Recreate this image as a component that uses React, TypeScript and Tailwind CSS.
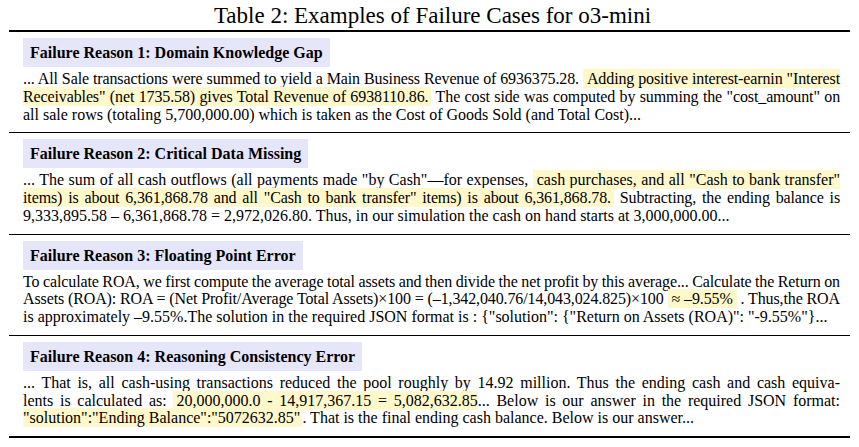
import React from 'react';

type Line = { parts: React.ReactNode; last?: boolean; tight?: boolean };

function Hl({ children, className = '' }: { children: React.ReactNode; className?: string }) {
  return <span className={`bg-[#fff8cb] py-px ${className}`}>{children}</span>;
}

function Section({ title, lines, first }: { title: string; lines: Line[]; first?: boolean }) {
  return (
    <div className={`pl-[14px] pr-[10px] pt-[6px] pb-[9px] ${first ? '' : 'border-t border-black'}`}>
      <div className="inline-block h-[29px] leading-[29px] px-[7px] bg-[#e6e6fa] font-bold text-[16px]">
        {title}
      </div>
      <div className="mt-[3px] text-[16px] leading-[17.75px]">
        {lines.map((l, i) => (
          <div
            key={i}
            className={
              l.last
                ? 'text-left whitespace-nowrap'
                : l.tight
                  ? 'text-justify [text-align-last:justify] whitespace-nowrap tracking-[-0.12px] [word-spacing:-2px]'
                  : 'text-justify [text-align-last:justify] whitespace-nowrap [word-spacing:-2px]'
            }
          >
            {l.parts}
          </div>
        ))}
      </div>
    </div>
  );
}

export default function App() {
  return (
    <div className="w-[859px] h-[447px] bg-white text-black font-['Liberation_Serif',serif] overflow-hidden">
      <div className="h-[30px] pt-[2px] pl-[6px] text-center text-[23px] leading-[28px]">
        Table 2: Examples of Failure Cases for o3-mini
      </div>
      <div className="ml-[9px] w-[841px] border-t-2 border-b-2 border-black">
        <Section
          first
          title="Failure Reason 1: Domain Knowledge Gap"
          lines={[
            {
              tight: true,
              parts: (
                <>
                  ... All Sale transactions were summed to yield a Main Business Revenue of 6936375.28.{' '}
                  <Hl className="pl-[4px]">Adding positive interest-earnin "Interest</Hl>
                </>
              ),
            },
            {
              tight: true,
              parts: (
                <>
                  <Hl className="pr-[3px]">Receivables" (net 1735.58) gives Total Revenue of 6938110.86.</Hl> The cost
                  side was computed by summing the "cost_amount" on
                </>
              ),
            },
            {
              last: true,
              parts: <>all sale rows (totaling 5,700,000.00) which is taken as the Cost of Goods Sold (and Total Cost)...</>,
            },
          ]}
        />
        <Section
          title="Failure Reason 2: Critical Data Missing"
          lines={[
            {
              parts: (
                <>
                  ... The sum of all cash outflows (all payments made "by Cash"—for expenses,{' '}
                  <Hl className="pl-[4px]">cash purchases, and all "Cash to bank transfer"</Hl>
                </>
              ),
            },
            {
              tight: true,
              parts: (
                <>
                  <Hl className="pr-[3px]">items) is about 6,361,868.78 and all "Cash to bank transfer" items) is about 6,361,868.78.</Hl>{' '}
                  Subtracting, the ending balance is
                </>
              ),
            },
            {
              last: true,
              parts: <>9,333,895.58 – 6,361,868.78 = 2,972,026.80. Thus, in our simulation the cash on hand starts at 3,000,000.00...</>,
            },
          ]}
        />
        <Section
          title="Failure Reason 3: Floating Point Error"
          lines={[
            {
              tight: true,
              parts: (
                <>
                  To calculate ROA, we first compute the average total assets and then divide the net profit by this average...
                  Calculate the Return on
                </>
              ),
            },
            {
              tight: true,
              parts: (
                <>
                  Assets (ROA): ROA = (Net Profit/Average Total Assets)×100 = (–1,342,040.76/14,043,024.825)×100{' '}
                  <Hl className="px-[4px]">≈ –9.55%</Hl> . Thus,the ROA
                </>
              ),
            },
            {
              last: true,
              parts: <>is approximately –9.55%.The solution in the required JSON format is : {'{'}"solution": {'{'}"Return on Assets (ROA)": "-9.55%"{'}'}...</>,
            },
          ]}
        />
        <Section
          title="Failure Reason 4: Reasoning Consistency Error"
          lines={[
            {
              parts: (
                <>
                  ... That is, all cash-using transactions reduced the pool roughly by 14.92 million. Thus the ending cash and
                  cash equiva-
                </>
              ),
            },
            {
              parts: (
                <>
                  lents is calculated as: <Hl className="pl-[3px]">20,000,000.0 - 14,917,367.15 = 5,082,632.85</Hl>... Below is
                  our answer in the required JSON format:
                </>
              ),
            },
            {
              last: true,
              parts: (
                <>
                  <Hl className="pr-[2px]">"solution":"Ending Balance":"5072632.85"</Hl>. That is the final ending cash balance.
                  Below is our answer...
                </>
              ),
            },
          ]}
        />
      </div>
    </div>
  );
}
